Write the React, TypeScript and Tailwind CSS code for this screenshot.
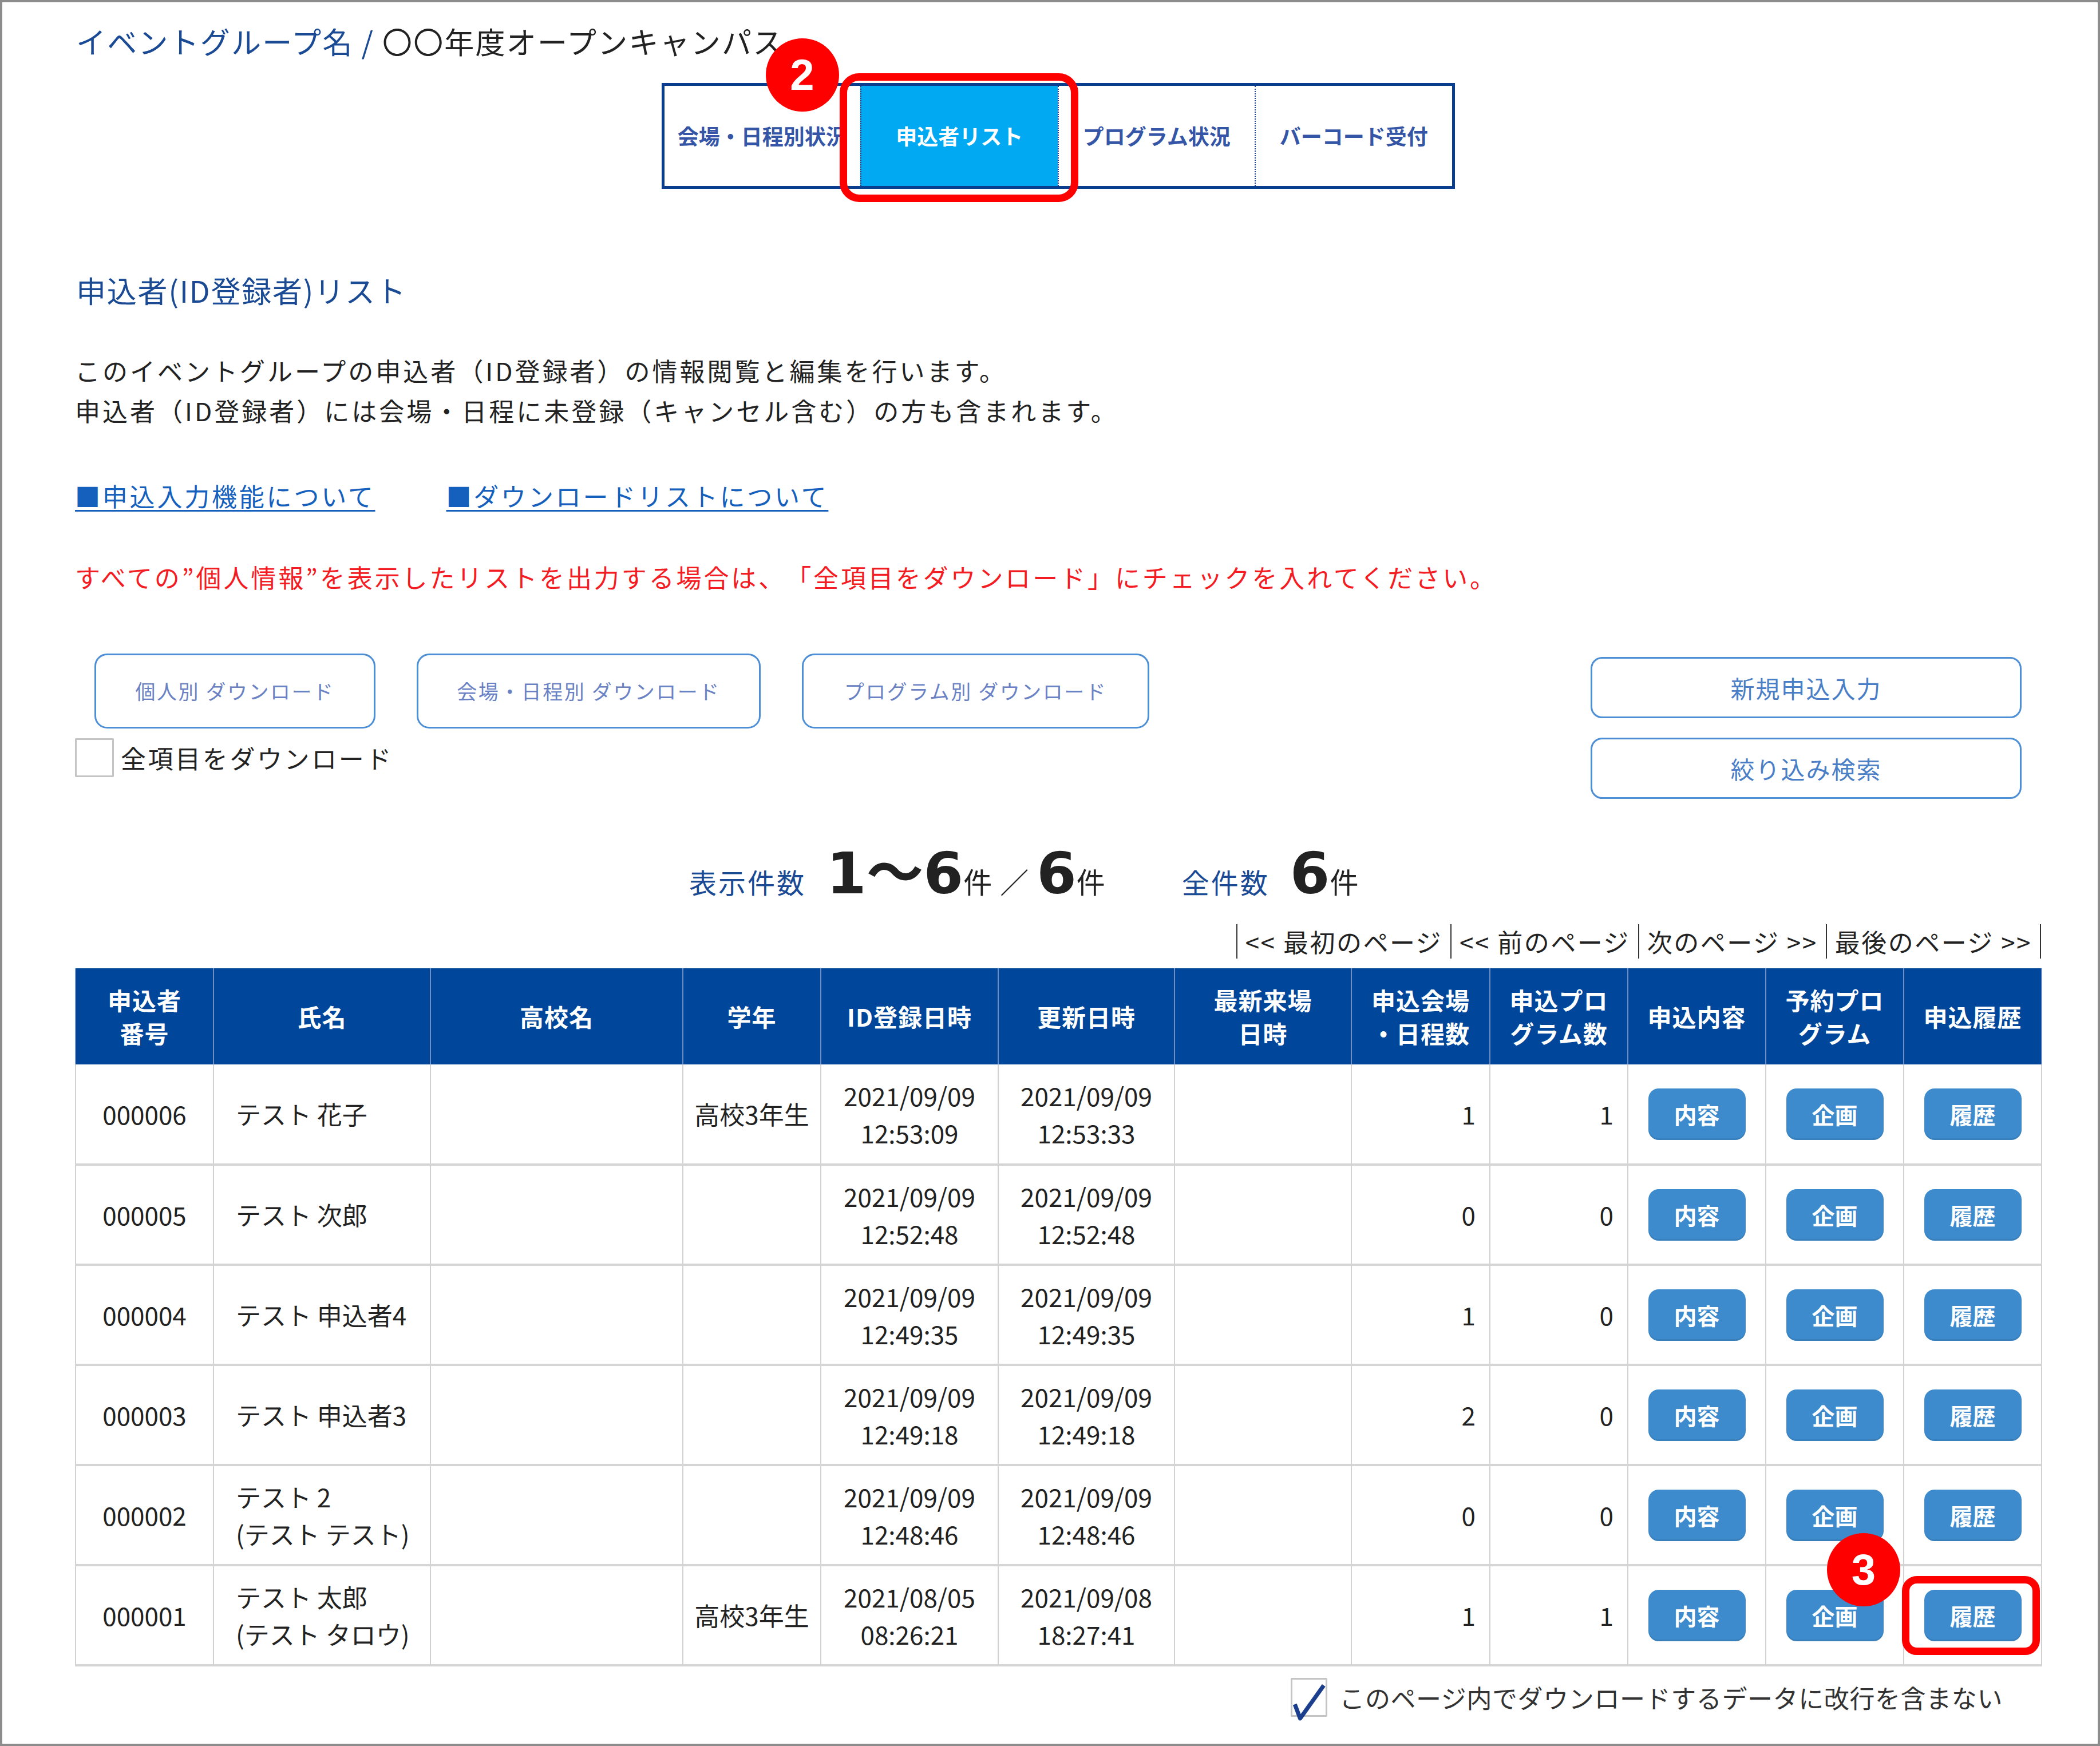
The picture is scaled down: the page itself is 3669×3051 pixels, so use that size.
import React from "react";

const headers = [
  ["申込者", "番号"],
  ["氏名"],
  ["高校名"],
  ["学年"],
  ["ID登録日時"],
  ["更新日時"],
  ["最新来場", "日時"],
  ["申込会場", "・日程数"],
  ["申込プロ", "グラム数"],
  ["申込内容"],
  ["予約プロ", "グラム"],
  ["申込履歴"],
];

const colWidths = [241, 379, 441, 241, 310, 308, 309, 242, 241, 241, 241, 241];

const rows = [
  { no: "000006", name: ["テスト 花子"], grade: "高校3年生", reg: ["2021/09/09", "12:53:09"], upd: ["2021/09/09", "12:53:33"], venue: 1, prog: 1 },
  { no: "000005", name: ["テスト 次郎"], grade: "", reg: ["2021/09/09", "12:52:48"], upd: ["2021/09/09", "12:52:48"], venue: 0, prog: 0 },
  { no: "000004", name: ["テスト 申込者4"], grade: "", reg: ["2021/09/09", "12:49:35"], upd: ["2021/09/09", "12:49:35"], venue: 1, prog: 0 },
  { no: "000003", name: ["テスト 申込者3"], grade: "", reg: ["2021/09/09", "12:49:18"], upd: ["2021/09/09", "12:49:18"], venue: 2, prog: 0 },
  { no: "000002", name: ["テスト 2", "(テスト テスト)"], grade: "", reg: ["2021/09/09", "12:48:46"], upd: ["2021/09/09", "12:48:46"], venue: 0, prog: 0 },
  { no: "000001", name: ["テスト 太郎", "(テスト タロウ)"], grade: "高校3年生", reg: ["2021/08/05", "08:26:21"], upd: ["2021/09/08", "18:27:41"], venue: 1, prog: 1 },
];

const tabs = ["会場・日程別状況", "申込者リスト", "プログラム状況", "バーコード受付"];

function RowButton({ label }: { label: string }) {
  return (
    <button className="w-[170px] h-[90px] rounded-[18px] bg-[#3d8bcd] text-white font-bold text-[40px] leading-none shadow-[inset_0_-3px_0_rgba(0,0,0,0.08)]">
      {label}
    </button>
  );
}

export default function App() {
  return (
    <div className="relative box-border w-[3669px] h-[3051px] overflow-hidden border-[4px] border-[#8c8c8c] bg-white font-['Noto_Sans_CJK_JP',sans-serif] text-[#222] [text-spacing-trim:space-all]">
      <div className="pl-[127px] pr-[99px] pt-[37px]">
        {/* タイトル */}
        <h1 className="ml-[2px] text-[52px] leading-[62px] tracking-[2.2px]">
          <span className="text-[#1a4a94]">イベントグループ名 / </span>
          〇〇年度オープンキャンパス
        </h1>

        {/* タブ */}
        <div className="relative mx-auto mt-[42px] flex w-[1386px] h-[185px] border-[5px] border-[#0b3d8f]">
          {tabs.map((t, i) => (
            <div
              key={t}
              className={
                "flex flex-1 items-center justify-center text-[37px] font-bold " +
                (i > 0 ? "border-l-2 border-dotted border-[#1a3f8f] " : "") +
                (i === 1 ? "bg-[#00a9f1] text-white" : "text-[#3556a6]")
              }
            >
              {t}
            </div>
          ))}
          <div className="absolute left-[306px] top-[-22px] w-[417px] h-[225px] rounded-[34px] border-[13px] border-[#ff0000]" />
          <div className="absolute left-[177px] top-[-83px] flex w-[128px] h-[128px] items-center justify-center rounded-full bg-[#ff0000] font-['Liberation_Sans',sans-serif] text-[76px] font-bold text-white">
            2
          </div>
        </div>

        {/* 見出し・説明 */}
        <h2 className="mt-[146px] ml-[2px] text-[52px] leading-[62px] tracking-[1.8px] text-[#1a4a94]">
          申込者(ID登録者)リスト
        </h2>
        <div className="mt-[74px] text-[44px] leading-[70px] tracking-[4px]">
          <p>このイベントグループの申込者（ID登録者）の情報閲覧と編集を行います。</p>
          <p>申込者（ID登録者）には会場・日程に未登録（キャンセル含む）の方も含まれます。</p>
        </div>
        <div className="mt-[79px] flex gap-[124px] text-[44px] leading-[70px] tracking-[3.8px] text-[#1560bd]">
          <a className="underline decoration-[3px] underline-offset-[6px]">■申込入力機能について</a>
          <a className="underline decoration-[3px] underline-offset-[6px]">■ダウンロードリストについて</a>
        </div>
        <p className="mt-[72px] text-[44px] leading-[70px] tracking-[3.9px] text-[#f41c23]">
          すべての”個人情報”を表示したリストを出力する場合は、「全項目をダウンロード」にチェックを入れてください。
        </p>

        {/* ボタン */}
        <div className="mt-[99px] flex justify-between">
          <div>
            <div className="flex gap-[72px] pl-[34px]">
              {[
                ["個人別 ダウンロード", "w-[491px]"],
                ["会場・日程別 ダウンロード", "w-[601px]"],
                ["プログラム別 ダウンロード", "w-[607px]"],
              ].map(([label, w]) => (
                <button
                  key={label}
                  className={w + " h-[131px] rounded-[22px] border-[3px] border-[#4c8fd6] bg-white text-[35px] tracking-[2.5px] text-[#6a82c4]"}
                >
                  {label}
                </button>
              ))}
            </div>
            <label className="mt-[17px] flex items-center gap-[12px] text-[44px] tracking-[3.6px]">
              <span className="box-border block w-[68px] h-[68px] rounded-[2px] border-[3px] border-[#c4c4c4] bg-white" />
              全項目をダウンロード
            </label>
          </div>
          <div className="mt-[6px] mr-[34px] flex flex-col gap-[34px]">
            {["新規申込入力", "絞り込み検索"].map((label) => (
              <button
                key={label}
                className="w-[753px] h-[107px] rounded-[20px] border-[3px] border-[#4c8fd6] bg-white text-[42px] tracking-[2px] text-[#4a7ec6]"
              >
                {label}
              </button>
            ))}
          </div>
        </div>

        {/* 件数 */}
        <div className="mt-[81px] flex items-baseline pl-[1073px] leading-none">
          <span className="text-[48px] tracking-[3px] text-[#1a4a94]">表示件数</span>
          <span className="ml-[36px] font-['DejaVu_Sans','Noto_Sans_CJK_JP',sans-serif] text-[100px] font-bold">1〜6</span>
          <span className="text-[50px]">件</span>
          <span className="mx-[14px] text-[50px]">／</span>
          <span className="font-['DejaVu_Sans',sans-serif] text-[100px] font-bold">6</span>
          <span className="text-[50px]">件</span>
          <span className="ml-[134px] text-[48px] tracking-[3px] text-[#1a4a94]">全件数</span>
          <span className="ml-[36px] font-['DejaVu_Sans',sans-serif] text-[100px] font-bold">6</span>
          <span className="text-[50px]">件</span>
        </div>

        {/* ページ送り */}
        <div className="mt-[38px] flex justify-end text-[44px] leading-[60px] tracking-[2.5px]">
          {["<< 最初のページ", "<< 前のページ", "次のページ >>", "最後のページ >>"].map((p) => (
            <span key={p} className="border-l-2 border-[#333] px-[14px]">
              {p}
            </span>
          ))}
          <span className="border-l-2 border-[#333]" />
        </div>

        {/* 一覧 */}
        <table className="mt-[17px] w-[3435px] table-fixed border-collapse">
          <colgroup>
            {colWidths.map((w, i) => (
              <col key={i} style={{ width: w }} />
            ))}
          </colgroup>
          <thead>
            <tr className="h-[168px] bg-[#00479b]">
              {headers.map((h, i) => (
                <th
                  key={i}
                  className="border-x-2 border-[#6f8fc4] text-[42px] font-bold leading-[58px] tracking-[1px] text-white"
                >
                  {h.map((l) => (
                    <div key={l}>{l}</div>
                  ))}
                </th>
              ))}
            </tr>
          </thead>
          <tbody className="text-[44px] leading-[65px]">
            {rows.map((r) => (
              <tr key={r.no} className="h-[175px] border-b-[4px] border-[#d5d5d5]">
                <td className="border-x-2 border-[#d2d2d2] text-center">{r.no}</td>
                <td className="border-x-2 border-[#d2d2d2] pl-[38px]">
                  {r.name.map((n) => (
                    <div key={n}>{n}</div>
                  ))}
                </td>
                <td className="border-x-2 border-[#d2d2d2]" />
                <td className="border-x-2 border-[#d2d2d2] text-center">{r.grade}</td>
                <td className="border-x-2 border-[#d2d2d2] text-center">
                  <div>{r.reg[0]}</div>
                  <div>{r.reg[1]}</div>
                </td>
                <td className="border-x-2 border-[#d2d2d2] text-center">
                  <div>{r.upd[0]}</div>
                  <div>{r.upd[1]}</div>
                </td>
                <td className="border-x-2 border-[#d2d2d2]" />
                <td className="border-x-2 border-[#d2d2d2] pr-[24px] text-right">{r.venue}</td>
                <td className="border-x-2 border-[#d2d2d2] pr-[24px] text-right">{r.prog}</td>
                <td className="border-x-2 border-[#d2d2d2] text-center">
                  <RowButton label="内容" />
                </td>
                <td className="border-x-2 border-[#d2d2d2] text-center">
                  <RowButton label="企画" />
                </td>
                <td className="border-x-2 border-[#d2d2d2] text-center">
                  <RowButton label="履歴" />
                </td>
              </tr>
            ))}
          </tbody>
        </table>

        {/* 改行オプション */}
        <label className="mt-[20px] flex items-center justify-end gap-[21px] pr-[67px] text-[44px] tracking-[0.6px] text-[#333]">
          <span className="relative box-border block w-[64px] h-[68px] rounded-[2px] border-[3px] border-[#c4c4c4] bg-white">
            <svg className="absolute left-[-4px] top-[6px]" width="66" height="66" viewBox="0 0 64 64">
              <path d="M8 36 L17 60 L57 4" fill="none" stroke="#1b3f8c" strokeWidth="7" strokeLinejoin="round" />
            </svg>
          </span>
          このページ内でダウンロードするデータに改行を含まない
        </label>
      </div>

      {/* 注釈 3 */}
      <div className="absolute left-[3319px] top-[2750px] w-[241px] h-[138px] rounded-[26px] border-[13px] border-[#ff0000]" />
      <div className="absolute left-[3188px] top-[2675px] flex w-[128px] h-[128px] items-center justify-center rounded-full bg-[#ff0000] font-['Liberation_Sans',sans-serif] text-[76px] font-bold text-white">
        3
      </div>
    </div>
  );
}
